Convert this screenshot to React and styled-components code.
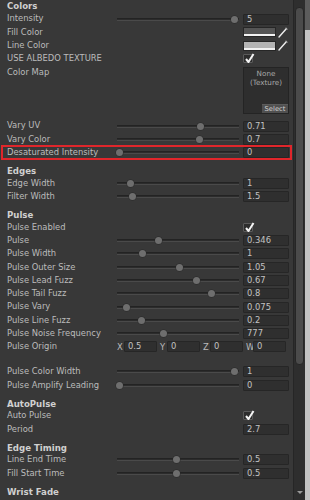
import React from "react";
import styled, { createGlobalStyle } from "styled-components";

const GlobalStyle = createGlobalStyle`
  html, body {
    margin: 0;
    padding: 0;
    background: #383838;
  }
  body {
    font-family: "DejaVu Sans", Verdana, sans-serif;
  }
`;

const Window = styled.div`
  width: 310px;
  height: 500px;
  display: flex;
  overflow: hidden;
  background: #383838;
`;

const Panel = styled.div`
  width: 293px;
  padding: 0 4px 0 7px;
  box-sizing: border-box;
  display: flex;
  flex-direction: column;
`;

const ScrollTrack = styled.div`
  width: 12px;
  border-left: 1px solid #262626;
  background: #2e2e2e;
  display: flex;
  flex-direction: column;
  align-items: center;
  padding-top: 7px;
  box-sizing: border-box;
`;

const ScrollThumb = styled.div`
  width: 9px;
  height: 358px;
  border-radius: 4px;
  background: #4b4b4b;
  border: 1px solid #262626;
  box-sizing: border-box;
`;

const ScrollArrow = styled.div`
  margin-top: auto;
  margin-bottom: 6px;
  width: 0;
  height: 0;
  border-left: 3px solid transparent;
  border-right: 3px solid transparent;
  border-top: 3px solid #9a9a9a;
`;

const EdgeStrip = styled.div`
  width: 5px;
  background: linear-gradient(#5c5c5c 0, #5c5c5c 30px, #c2c2c2 30px);
`;

const Header = styled.div`
  height: 9.4px;
  line-height: 9.4px;
  padding-top: ${(p) => (p.$first ? "1.6px" : "8px")};
  padding-bottom: ${(p) => (p.$first ? "1.4px" : "0")};
  font-size: 8.6px;
  font-weight: bold;
  color: #d0d0d0;
  white-space: nowrap;
`;

const Row = styled.div`
  position: relative;
  height: ${(p) => p.$h || "13.3px"};
  display: flex;
  align-items: ${(p) => (p.$top ? "flex-start" : "center")};

  &::after {
    content: "";
    display: ${(p) => (p.$marked ? "block" : "none")};
    position: absolute;
    left: -6px;
    right: -3px;
    top: -1px;
    bottom: -1px;
    border: 2px solid #e0262b;
  }
`;

const Label = styled.div`
  width: 110px;
  flex: none;
  font-size: 8.4px;
  color: #bcbcbc;
  white-space: nowrap;
  line-height: 13.3px;
`;

const Control = styled.div`
  flex: 1;
  display: flex;
  align-items: ${(p) => (p.$top ? "flex-start" : "center")};
  height: 100%;
`;

const Gap = styled.div`
  width: 126px;
  flex: none;
`;

const Track = styled.div`
  position: relative;
  width: 122px;
  height: 3px;
  margin-right: 4px;
  box-sizing: border-box;
  background: #2c2c2c;
  border-top: 1px solid #232323;
  border-bottom: 1px solid #4a4a4a;
`;

const Thumb = styled.div`
  position: absolute;
  top: -3px;
  width: 7px;
  height: 7px;
  border-radius: 50%;
  background: #6e6e6e;
  box-shadow: 0 0 0 0.5px #2a2a2a;
`;

const Field = styled.div`
  width: ${(p) => p.$w || "46px"};
  height: 11px;
  box-sizing: border-box;
  background: #2f2f2f;
  border: 1px solid #262626;
  border-radius: 1px;
  font-size: 8.4px;
  line-height: 9px;
  color: #c2c2c2;
  padding-left: 3px;
  white-space: nowrap;
  overflow: hidden;
`;

const Swatch = styled.div`
  width: 33px;
  height: 10px;
  box-sizing: border-box;
  border: 1px solid #262626;
  margin-right: 2px;
  display: flex;
  flex-direction: column;
`;

const SwatchColor = styled.div`
  flex: 1;
  background: ${(p) => p.$color};
`;

const SwatchAlpha = styled.div`
  height: 2px;
  background: #f2f2f2;
`;

const CheckBox = styled.div`
  position: relative;
  width: 10px;
  height: 9px;
  box-sizing: border-box;
  background: #2c2c2c;
  border: 1px solid #5a5a5a;
  border-radius: 1px;

  svg {
    position: absolute;
    left: 0;
    top: -3px;
  }
`;

const TextureBox = styled.div`
  margin-top: 1.5px;
  width: 46px;
  height: 47px;
  box-sizing: border-box;
  background: #2e2e2e;
  border: 1px solid #242424;
  display: flex;
  flex-direction: column;
  align-items: center;
  font-size: 7.2px;
  line-height: 9px;
  color: #a9a9a9;
  padding-top: 1px;
`;

const SelectButton = styled.div`
  margin-top: auto;
  align-self: flex-end;
  width: 26px;
  height: 8px;
  background: #505050;
  border-top: 1px solid #5c5c5c;
  font-size: 6.8px;
  line-height: 8px;
  text-align: center;
  color: #d0d0d0;
`;

const VectorGrid = styled.div`
  flex: 1;
  display: grid;
  grid-template-columns: repeat(4, 1fr);
  align-items: center;
`;

const VectorCell = styled.div`
  display: flex;
  align-items: center;
  padding-right: 3px;
`;

const AxisLabel = styled.span`
  width: 7px;
  font-size: 8.4px;
  color: #bcbcbc;
`;

const Spacer = styled.div`
  height: 11.7px;
  flex: none;
`;

function Picker() {
  return (
    <svg width="10" height="11" viewBox="0 0 10 11">
      <path d="M1 10 L8.5 1.5" stroke="#eeeeee" strokeWidth="1.4" strokeLinecap="round" />
      <path d="M7.5 1 L9.5 2.5" stroke="#9a9a9a" strokeWidth="1" />
    </svg>
  );
}

function Check() {
  return (
    <svg width="11" height="12" viewBox="0 0 11 12">
      <path d="M2 7 L4.5 10 L9.5 2" stroke="#f4f4f4" strokeWidth="2" fill="none" strokeLinejoin="round" />
    </svg>
  );
}

function Slider({ t, value }) {
  return (
    <Control>
      <Track>
        <Thumb style={{ left: t * 115 - 1.5 }} />
      </Track>
      <Field>{value}</Field>
    </Control>
  );
}

function PropRow({ row }) {
  switch (row.type) {
    case "slider":
      return (
        <Row $marked={row.marked}>
          <Label>{row.label}</Label>
          <Slider t={row.t} value={row.value} />
        </Row>
      );
    case "color":
      return (
        <Row>
          <Label>{row.label}</Label>
          <Control>
            <Gap />
            <Swatch>
              <SwatchColor $color={row.color} />
              <SwatchAlpha />
            </Swatch>
            <Picker />
          </Control>
        </Row>
      );
    case "check":
      return (
        <Row>
          <Label>{row.label}</Label>
          <Control>
            <Gap />
            <CheckBox>
              <Check />
            </CheckBox>
          </Control>
        </Row>
      );
    case "texture":
      return (
        <Row $h="53.8px" $top>
          <Label>{row.label}</Label>
          <Control $top>
            <Gap />
            <TextureBox>
              <span>None</span>
              <span>(Texture)</span>
              <SelectButton>Select</SelectButton>
            </TextureBox>
          </Control>
        </Row>
      );
    case "field":
      return (
        <Row>
          <Label>{row.label}</Label>
          <Control>
            <Gap />
            <Field>{row.value}</Field>
          </Control>
        </Row>
      );
    case "vector":
      return (
        <Row>
          <Label>{row.label}</Label>
          <VectorGrid>
            {row.values.map(([axis, v]) => (
              <VectorCell key={axis}>
                <AxisLabel>{axis}</AxisLabel>
                <Field $w="33px">{v}</Field>
              </VectorCell>
            ))}
          </VectorGrid>
        </Row>
      );
    case "spacer":
      return <Spacer />;
    default:
      return null;
  }
}

// thumb x in the screenshot -> 0..1 along the track
const pos = (x) => (x - 119) / 116;

const sections = [
  {
    title: "Colors",
    rows: [
      { label: "Intensity", type: "slider", t: 1, value: "5" },
      { label: "Fill Color", type: "color", color: "#555555" },
      { label: "Line Color", type: "color", color: "#b4b4b4" },
      { label: "USE ALBEDO TEXTURE", type: "check" },
      { label: "Color Map", type: "texture" },
      { label: "Vary UV", type: "slider", t: pos(201.5), value: "0.71" },
      { label: "Vary Color", type: "slider", t: pos(200.5), value: "0.7" },
      { label: "Desaturated Intensity", type: "slider", t: 0, value: "0", marked: true },
    ],
  },
  {
    title: "Edges",
    rows: [
      { label: "Edge Width", type: "slider", t: pos(131), value: "1" },
      { label: "Filter Width", type: "slider", t: pos(133), value: "1.5" },
    ],
  },
  {
    title: "Pulse",
    rows: [
      { label: "Pulse Enabled", type: "check" },
      { label: "Pulse", type: "slider", t: pos(159), value: "0.346" },
      { label: "Pulse Width", type: "slider", t: pos(143), value: "1" },
      { label: "Pulse Outer Size", type: "slider", t: pos(180), value: "1.05" },
      { label: "Pulse Lead Fuzz", type: "slider", t: pos(197), value: "0.67" },
      { label: "Pulse Tail Fuzz", type: "slider", t: pos(212), value: "0.8" },
      { label: "Pulse Vary", type: "slider", t: pos(127), value: "0.075" },
      { label: "Pulse Line Fuzz", type: "slider", t: pos(142), value: "0.2" },
      { label: "Pulse Noise Frequency", type: "slider", t: pos(164), value: "777" },
      {
        label: "Pulse Origin",
        type: "vector",
        values: [
          ["X", "0.5"],
          ["Y", "0"],
          ["Z", "0"],
          ["W", "0"],
        ],
      },
      { type: "spacer" },
      { label: "Pulse Color Width", type: "slider", t: 1, value: "1" },
      { label: "Pulse Amplify Leading", type: "slider", t: 0, value: "0" },
    ],
  },
  {
    title: "AutoPulse",
    rows: [
      { label: "Auto Pulse", type: "check" },
      { label: "Period", type: "field", value: "2.7" },
    ],
  },
  {
    title: "Edge Timing",
    rows: [
      { label: "Line End Time", type: "slider", t: pos(177), value: "0.5" },
      { label: "Fill Start Time", type: "slider", t: pos(177), value: "0.5" },
    ],
  },
  { title: "Wrist Fade", rows: [] },
];

export default function App() {
  return (
    <>
      <GlobalStyle />
      <Window>
        <Panel>
          {sections.map((s, i) => (
            <React.Fragment key={s.title}>
              <Header $first={i === 0}>{s.title}</Header>
              {s.rows.map((r, j) => (
                <PropRow key={j} row={r} />
              ))}
            </React.Fragment>
          ))}
        </Panel>
        <ScrollTrack>
          <ScrollThumb />
          <ScrollArrow />
        </ScrollTrack>
        <EdgeStrip />
      </Window>
    </>
  );
}
